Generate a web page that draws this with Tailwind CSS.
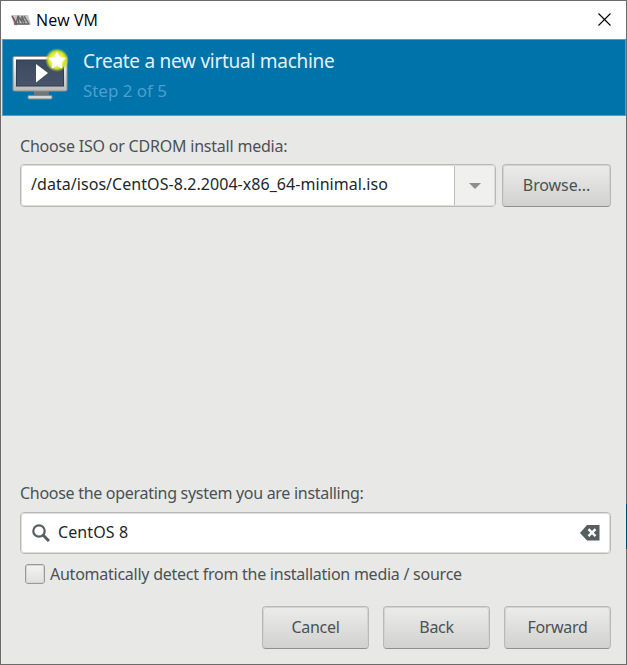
<!DOCTYPE html>
<html lang="en">
<head>
<meta charset="utf-8">
<title>New VM</title>
<script src="https://cdn.jsdelivr.net/npm/@tailwindcss/browser@4"></script>
</head>
<body class="relative w-[627px] h-[665px] overflow-hidden">
<div class="w-[627px] h-[665px] border border-[#6b6b6b] bg-[#e8e8e6] flex flex-col text-[16px] leading-[22px] text-[#4b5254] whitespace-nowrap font-['Noto_Sans',sans-serif]">
  <header class="h-[38px] shrink-0 bg-white flex items-center pl-[10px] pr-[15px]">
    <svg class="w-5 h-3" viewBox="0 0 20 12">
      <path d="M0 1H17L20 11H3Z" fill="#c4c4c4"/>
      <path d="M1 2l4 8 2-8M8 10L7 2l4 6V2l3 8M13 2l5 8M3 10h15" fill="none" stroke="#666" stroke-width="1.4"/>
      <path d="M2 3l3 6" stroke="#a0455b" stroke-width="1.3"/>
      <path d="M8 4h7M10 7h6" stroke="#777" stroke-width="1"/>
    </svg>
    <h1 class="ml-[5px] text-[16px] leading-5 text-black tracking-[0.1px] pb-px font-['Open_Sans',sans-serif]">New VM</h1>
    <svg class="ml-auto w-[13px] h-[13px] mb-px" viewBox="0 0 13 13" fill="none" stroke="#000" stroke-width="1.1"><path d="M.5.5l12 12M12.500.5l-12 12"/></svg>
  </header>
  <section class="h-[77px] shrink-0 ml-px bg-[#0073aa] border border-[#5a9abb] flex pl-[9px]">
    <svg class="w-[60px] h-[60px] mt-[5px]" viewBox="0 0 60 60">
      <defs>
        <linearGradient id="frame" x2="0" y2="1"><stop stop-color="#fff"/><stop offset="1" stop-color="#b9b9b7"/></linearGradient>
        <linearGradient id="screen" x2="0" y2="1"><stop stop-color="#3b4a60"/><stop offset="1" stop-color="#485468"/></linearGradient>
        <radialGradient id="glow"><stop offset=".4" stop-color="#f6f870"/><stop offset=".72" stop-color="#d5df1c"/><stop offset="1" stop-color="#a5c740" stop-opacity="0"/></radialGradient>
      </defs>
      <path d="M22 45h15v7H22z" fill="#72767a"/>
      <rect x="16" y="50.500" width="24" height="3.500" rx="1" fill="#d8d8d6" stroke="#85898b"/>
      <rect x="1" y="11.500" width="54" height="34.500" rx="1.500" fill="url(#frame)" stroke="#8e9294"/>
      <rect x="4.500" y="15" width="47" height="26" fill="url(#screen)" stroke="#303b4c"/>
      <path d="M24 19L36 28 24 37.500Z" fill="#fff"/>
      <circle cx="45" cy="15" r="12" fill="url(#glow)"/>
      <path d="M45 8l2.300 4.800 5.300.7-3.900 3.700 1 5.300-4.700-2.600-4.700 2.600 1-5.300-3.900-3.700 5.300-.7z" fill="#fff" stroke="#fff" stroke-width="1.500" stroke-linejoin="round"/>
    </svg>
    <div class="ml-[11px] pt-[9px]">
      <h2 class="text-[19px] leading-6 text-[#e2f1f8] tracking-[-0.27px]">Create a new virtual machine</h2>
      <p class="mt-[6px] text-[17px] leading-6 text-[#4a9fd0] tracking-[-0.05px]">Step 2 of 5</p>
    </div>
  </section>
  <main class="flex-1 flex flex-col pl-[19px] pr-[15px]">
    <label class="mt-[19px] tracking-[-0.21px]">Choose ISO or CDROM install media:</label>
    <div class="mt-[7px] flex gap-[6px]">
      <div class="w-[476px] h-[43px] rounded-[4px] border-[1px] border-[#b9bab7] outline outline-offset-[-2px] outline-[#dcdcda] bg-white flex overflow-hidden">
        <div class="w-[433px] pl-[10px] pt-[8px] text-[#222728] tracking-[0.05px]">/data/isos/CentOS-8.2.2004-x86_64-minimal.iso</div>
        <div class="flex-1 border-l border-[#bdbebc] bg-[#f0f0ef] flex items-center justify-center"><svg class="w-3 h-[6px]" viewBox="0 0 12 6"><path d="M0 0h12L6 6z" fill="#8c8f8f"/></svg></div>
      </div>
      <button class="w-[109px] h-[43px] rounded-[4px] border border-[#b9bab7] border-b-[#8f908d] outline outline-offset-[-2px] outline-[#d2d2cf] bg-linear-to-b from-[#ececeb] to-[#d1d1ce] pb-[2px] tracking-[-0.1px]">Browse...</button>
    </div>
    <label class="mt-[275px] tracking-[-0.29px]">Choose the operating system you are installing:</label>
    <div class="mt-[8px] h-[42px] rounded-[4px] border border-[#b9bab7] outline outline-offset-[-2px] outline-[#dcdcda] bg-white flex items-center pl-[11px] pr-[10px] text-[#222728]">
      <svg class="w-[18px] h-[18px]" viewBox="0 0 18 18" fill="none" stroke="#555f5f"><circle cx="7" cy="7" r="5.700" stroke-width="2.200"/><path d="M11 11l6 6" stroke-width="3"/></svg>
      <span class="ml-[8px] pb-[2px] tracking-[0.1px]">CentOS 8</span>
      <svg class="ml-auto w-5 h-4" viewBox="0 0 20 16"><path d="M7 0h12.500v15.500H7L0 8z" fill="#555f5f"/><path d="M8.500 4.200l7 7M15.500 4.200l-7 7" stroke="#fff" stroke-width="2.400"/></svg>
    </div>
    <label class="mt-[10px] h-5 pl-[5px] flex items-center">
      <span class="w-5 h-5 rounded-[3px] border border-[#999b99] outline outline-offset-[-2px] outline-[#d5d5d3] bg-linear-to-b from-[#f3f3f2] to-[#e0e0de]"></span>
      <span class="ml-[5px] tracking-[-0.25px]">Automatically detect from the installation media / source</span>
    </label>
    <footer class="mt-[22px] flex justify-end gap-[14px] tracking-[-0.3px]">
      <button class="w-[107px] h-[43px] rounded-[4px] border border-[#b9bab7] border-b-[#8f908d] outline outline-offset-[-2px] outline-[#d2d2cf] bg-linear-to-b from-[#ececeb] to-[#d1d1ce] pb-[2px]">Cancel</button>
      <button class="w-[107px] h-[43px] rounded-[4px] border border-[#b9bab7] border-b-[#8f908d] outline outline-offset-[-2px] outline-[#d2d2cf] bg-linear-to-b from-[#ececeb] to-[#d1d1ce] pb-[2px]">Back</button>
      <button class="w-[107px] h-[43px] rounded-[4px] border border-[#b9bab7] border-b-[#8f908d] outline outline-offset-[-2px] outline-[#d2d2cf] bg-linear-to-b from-[#ececeb] to-[#d1d1ce] pb-[2px]">Forward</button>
    </footer>
  </main>
</div>
<div class="absolute right-0 top-[504px] w-px h-[45px] bg-[#00456b]"></div>
</body>
</html>
